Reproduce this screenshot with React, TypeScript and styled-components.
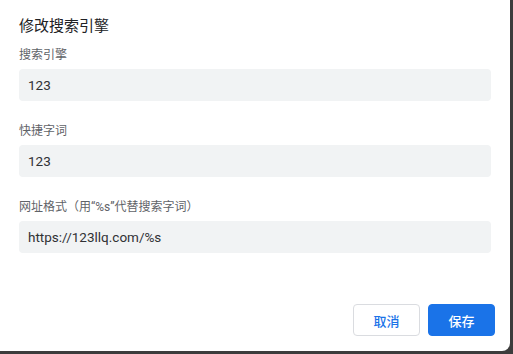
import styled, { createGlobalStyle } from 'styled-components';

const GlobalStyle = createGlobalStyle`
  html, body {
    margin: 0;
    padding: 0;
    background: #3c3c3c;
  }
  body {
    font-family: Roboto, "Noto Sans CJK SC", sans-serif;
  }
`;

const Page = styled.div`
  width: 513px;
  height: 354px;
  background: #3c3c3c;
`;

const Dialog = styled.div`
  width: 510px;
  height: 351px;
  box-sizing: border-box;
  background: #fff;
  border-radius: 0 0 8px 0;
  padding: 15px 15px 15px 19px;
  display: flex;
  flex-direction: column;
`;

const Title = styled.h1`
  margin: 1px 0 11px;
  font-size: 15px;
  font-weight: 400;
  line-height: 20px;
  color: #202124;
`;

const Field = styled.div`
  display: flex;
  flex-direction: column;
  margin-bottom: 22px;
  margin-right: 4px;
`;

const Label = styled.label`
  font-size: 12px;
  line-height: 16px;
  color: #5f6368;
  margin-bottom: 6px;
`;

const Input = styled.input`
  height: 32px;
  box-sizing: border-box;
  border: none;
  outline: none;
  border-radius: 4px;
  background: #f1f3f4;
  padding: 0 9px;
  font-family: Roboto, "Noto Sans CJK SC", sans-serif;
  font-size: 13.5px;
  color: #303134;
`;

const Footer = styled.div`
  margin-top: auto;
  display: flex;
  justify-content: flex-end;
  gap: 8px;
`;

const Button = styled.button<{ $primary?: boolean }>`
  width: 67px;
  height: 32px;
  box-sizing: border-box;
  border-radius: 4px;
  font-family: Roboto, "Noto Sans CJK SC", sans-serif;
  font-size: 13px;
  font-weight: 500;
  cursor: pointer;
  border: 1px solid ${(p) => (p.$primary ? '#1a73e8' : '#dadce0')};
  background: ${(p) => (p.$primary ? '#1a73e8' : '#fff')};
  color: ${(p) => (p.$primary ? '#fff' : '#1a73e8')};
`;

const fields = [
  { label: '搜索引擎', value: '123' },
  { label: '快捷字词', value: '123' },
  { label: '网址格式（用“%s”代替搜索字词）', value: 'https://123llq.com/%s' },
];

const App = () => {
  return (
    <Page>
      <GlobalStyle />
      <Dialog>
        <Title>修改搜索引擎</Title>
        {fields.map((f) => (
          <Field key={f.label}>
            <Label>{f.label}</Label>
            <Input defaultValue={f.value} />
          </Field>
        ))}
        <Footer>
          <Button>取消</Button>
          <Button $primary>保存</Button>
        </Footer>
      </Dialog>
    </Page>
  );
};

export default App;
